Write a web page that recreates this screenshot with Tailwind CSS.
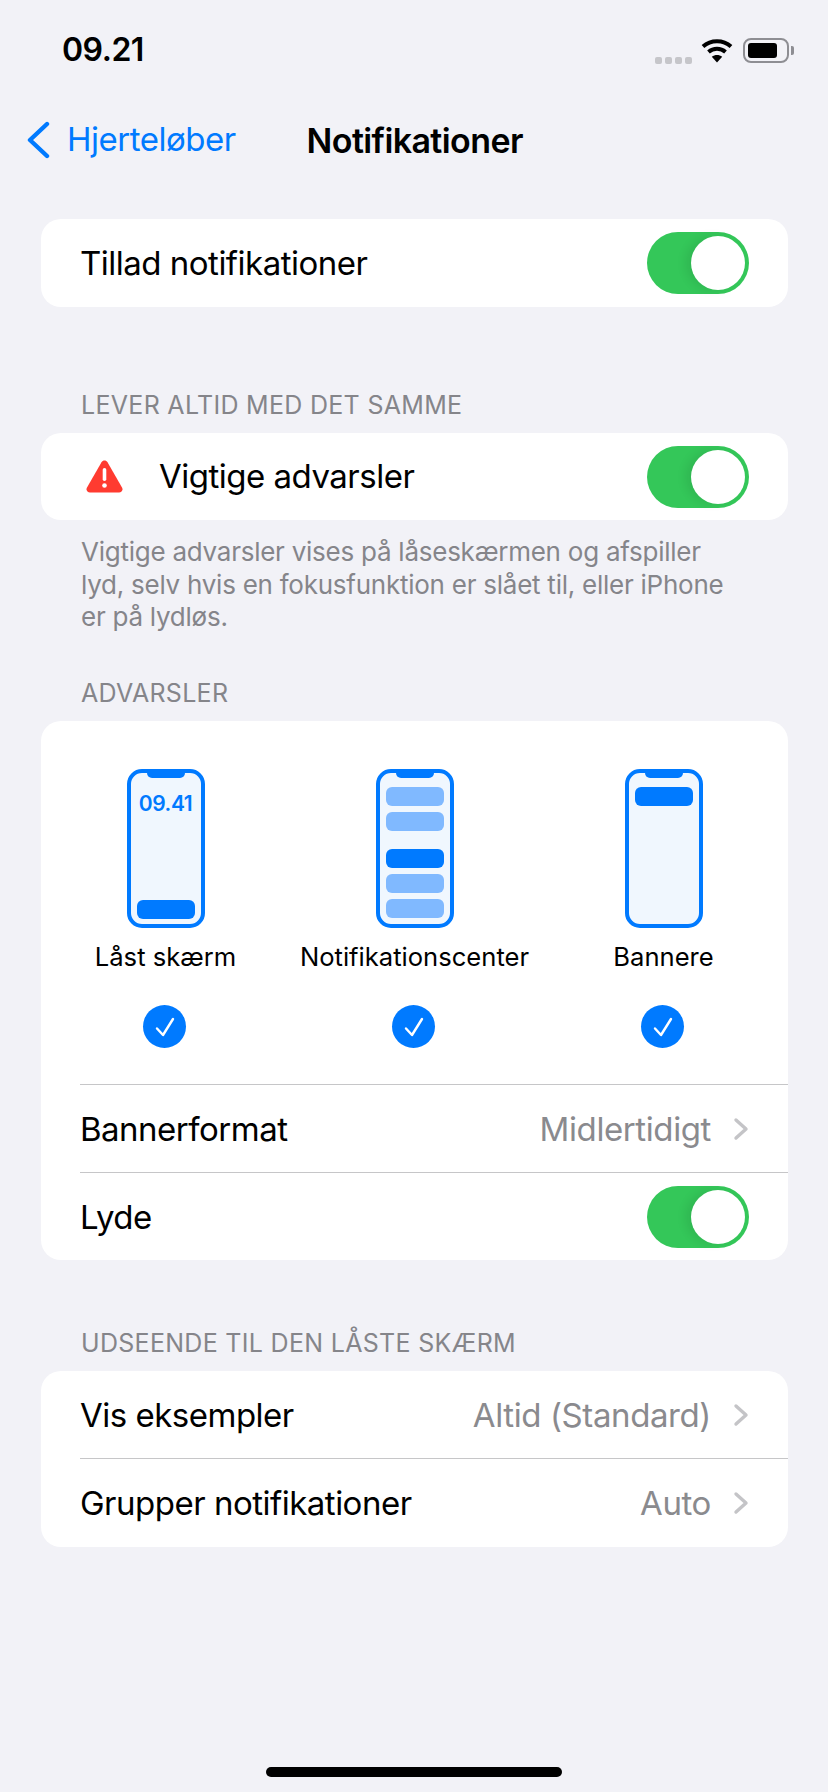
<!DOCTYPE html>
<html lang="da">
<head>
    <meta charset="UTF-8">
    <meta name="viewport" content="width=device-width, initial-scale=1.0">
    <title>Notifikationer</title>
    <script src="https://cdn.jsdelivr.net/npm/@tailwindcss/browser@4"></script>
</head>
<body class="bg-[#f2f2f7] font-[Inter,sans-serif] text-black">
<div class="w-[828px] h-[1792px] flex flex-col overflow-hidden">

    <!-- status bar -->
    <div class="h-[100px] shrink-0 flex items-center justify-between pl-[62px] pr-[34px]">
        <span class="text-[32px] font-semibold tracking-[-0.5px]">09.21</span>
        <div class="flex items-center">
            <div class="flex gap-[3px] mt-[20px] mr-[9px]">
                <span class="w-[7px] h-[7px] rounded-[2px] bg-[#c6c6ca]"></span>
                <span class="w-[7px] h-[7px] rounded-[2px] bg-[#c6c6ca]"></span>
                <span class="w-[7px] h-[7px] rounded-[2px] bg-[#c6c6ca]"></span>
                <span class="w-[7px] h-[7px] rounded-[2px] bg-[#c6c6ca]"></span>
            </div>
            <svg class="mr-[10px]" width="32" height="26" viewBox="0 0 32 26" fill="none" stroke="#000" stroke-width="4">
                <path d="M2 9.5C9.8 2.5 22.2 2.5 30 9.5"/>
                <path d="M7.5 15C12.3 10.8 19.7 10.8 24.500 15"/>
                <path d="M16 25.500L10.800 19.800C13.800 17.500 18.200 17.500 21.200 19.800Z" fill="#000" stroke="none"/>
            </svg>
            <div class="w-[46px] h-[25px] rounded-[8px] border-2 border-[#8e8e93] p-[3px] flex">
                <div class="w-[29px] h-full rounded-[3px] bg-black"></div>
            </div>
            <div class="w-[3px] h-[9px] ml-[2px] rounded-r-[2px] bg-[#8e8e93]"></div>
        </div>
    </div>

    <!-- nav bar -->
    <div class="h-[80px] shrink-0 flex items-center relative">
        <svg class="ml-[25px]" width="26" height="38" viewBox="0 0 26 38" fill="none" stroke="#007aff" stroke-width="4.400" stroke-linecap="round" stroke-linejoin="round">
            <path d="M22 3L5 19L22 35"/>
        </svg>
        <span class="ml-[16px] text-[#007aff] text-[33px] tracking-[-0.5px]">Hjerteløber</span>
        <span class="ml-[71px] text-[34px] font-semibold tracking-[-0.6px]">Notifikationer</span>
    </div>

    <!-- allow -->
    <div class="mt-[39px] ml-[41px] w-[747px] h-[88px] shrink-0 bg-white rounded-[20px] flex items-center justify-between pl-[39px] pr-[39px]">
        <span class="mt-[2px] text-[33px] tracking-[-0.5px]">Tillad notifikationer</span>
        <div class="w-[102px] h-[62px] rounded-full bg-[#34c759] p-[4px] flex justify-end">
            <div class="w-[54px] h-[54px] rounded-full bg-white shadow-[-6px_0_10px_rgba(0,0,0,0.08)]"></div>
        </div>
    </div>

    <!-- critical alerts -->
    <div class="h-[126px] shrink-0 mx-[40px] pl-[41px] flex items-end pb-[14px] text-[#85858a] text-[25px] leading-[28px] tracking-[0.3px]">LEVER ALTID MED DET SAMME</div>
    <div class="ml-[41px] w-[747px] h-[87px] shrink-0 bg-white rounded-[20px] flex items-center justify-between pr-[39px]">
        <div class="flex items-center">
            <svg class="ml-[45px]" width="37" height="33" viewBox="0 0 37 33">
                <path d="M15.500 2.200C16.800 0 20.200 0 21.500 2.200L36 27.500C37.300 29.800 35.700 32.500 33 32.500H4C1.300 32.500 -0.300 29.800 1 27.500Z" fill="#ff3b30"/>
                <rect x="16.700" y="8" width="3.600" height="13" rx="1.800" fill="#fff"/>
                <circle cx="18.500" cy="25.500" r="2.300" fill="#fff"/>
            </svg>
            <span class="ml-[36px] text-[33px] tracking-[-0.5px]">Vigtige advarsler</span>
        </div>
        <div class="w-[102px] h-[62px] rounded-full bg-[#34c759] p-[4px] flex justify-end">
            <div class="w-[54px] h-[54px] rounded-full bg-white shadow-[-6px_0_10px_rgba(0,0,0,0.08)]"></div>
        </div>
    </div>
    <p class="mt-[16px] mx-[40px] pl-[41px] h-[97px] shrink-0 text-[#85858a] text-[26px] leading-[32.500px] tracking-[-0.25px] whitespace-nowrap">
        <span class="block">Vigtige advarsler vises på låseskærmen og afspiller</span>
        <span class="block">lyd, selv hvis en fokusfunktion er slået til, eller iPhone</span>
        <span class="block">er på lydløs.</span>
    </p>

    <!-- alerts -->
    <div class="h-[88px] shrink-0 mx-[40px] pl-[41px] flex items-end pb-[14px] text-[#85858a] text-[25px] leading-[28px] tracking-[0.3px]">ADVARSLER</div>
    <div class="ml-[41px] w-[747px] h-[539px] shrink-0 bg-white rounded-[20px] flex flex-col">
        <div class="grid grid-cols-3 pt-[48px] h-[363px]">
            <div class="flex flex-col items-center">
                <div class="relative w-[78px] h-[159px] rounded-[15px] border-[4px] border-[#007aff] bg-[#f0f7fe] flex flex-col items-center px-[6px]">
                    <div class="absolute top-0 left-[16px] w-[38px] h-[5px] rounded-b-[5px] bg-[#007aff]"></div>
                    <span class="mt-[17px] text-[#007aff] text-[21px] leading-[28px] font-semibold tracking-[-0.4px]">09.41</span>
                    <div class="mt-auto mb-[5px] w-full h-[19px] rounded-[6px] bg-[#007aff]"></div>
                </div>
                <span class="mt-[14px] text-[25.6px] leading-[30px] whitespace-nowrap">Låst skærm</span>
                <div class="mt-[33px] mr-[2px] w-[43px] h-[43px] rounded-full bg-[#007aff] flex items-center justify-center">
                    <svg width="24" height="24" viewBox="0 0 24 24" fill="none" stroke="#fff" stroke-width="2.400" stroke-linecap="round" stroke-linejoin="round"><path d="M4 13.500L10 20L20 4"/></svg>
                </div>
            </div>
            <div class="flex flex-col items-center">
                <div class="relative w-[78px] h-[159px] rounded-[15px] border-[4px] border-[#007aff] bg-[#f0f7fe] flex flex-col items-center px-[6px] pt-[14px]">
                    <div class="absolute top-0 left-[16px] w-[38px] h-[5px] rounded-b-[5px] bg-[#007aff]"></div>
                    <div class="w-full h-[19px] rounded-[6px] bg-[#80b9ff]"></div>
                    <div class="mt-[6px] w-full h-[19px] rounded-[6px] bg-[#80b9ff]"></div>
                    <div class="mt-[18px] w-full h-[19px] rounded-[6px] bg-[#007aff]"></div>
                    <div class="mt-[6px] w-full h-[19px] rounded-[6px] bg-[#80b9ff]"></div>
                    <div class="mt-[6px] w-full h-[19px] rounded-[6px] bg-[#80b9ff]"></div>
                </div>
                <span class="mt-[14px] text-[25.6px] leading-[30px] whitespace-nowrap">Notifikationscenter</span>
                <div class="mt-[33px] mr-[2px] w-[43px] h-[43px] rounded-full bg-[#007aff] flex items-center justify-center">
                    <svg width="24" height="24" viewBox="0 0 24 24" fill="none" stroke="#fff" stroke-width="2.400" stroke-linecap="round" stroke-linejoin="round"><path d="M4 13.500L10 20L20 4"/></svg>
                </div>
            </div>
            <div class="flex flex-col items-center">
                <div class="relative w-[78px] h-[159px] rounded-[15px] border-[4px] border-[#007aff] bg-[#f0f7fe] flex flex-col items-center px-[6px] pt-[14px]">
                    <div class="absolute top-0 left-[16px] w-[38px] h-[5px] rounded-b-[5px] bg-[#007aff]"></div>
                    <div class="w-full h-[19px] rounded-[6px] bg-[#007aff]"></div>
                </div>
                <span class="mt-[14px] text-[25.6px] leading-[30px] whitespace-nowrap">Bannere</span>
                <div class="mt-[33px] mr-[2px] w-[43px] h-[43px] rounded-full bg-[#007aff] flex items-center justify-center">
                    <svg width="24" height="24" viewBox="0 0 24 24" fill="none" stroke="#fff" stroke-width="2.400" stroke-linecap="round" stroke-linejoin="round"><path d="M4 13.500L10 20L20 4"/></svg>
                </div>
            </div>
        </div>
        <div class="ml-[39px] h-[88px] border-t border-[#c6c6c8] flex items-center justify-between pr-[39px]">
            <span class="mt-[2px] text-[33px] tracking-[-0.5px]">Bannerformat</span>
            <div class="flex items-center">
                <span class="mt-[2px] text-[#8a8a8e] text-[33px] tracking-[-0.4px]">Midlertidigt</span>
                <svg class="ml-[22px]" width="16" height="24" viewBox="0 0 16 24" fill="none" stroke="#c4c4c7" stroke-width="3.400" stroke-linecap="round" stroke-linejoin="round"><path d="M3 3L13 12L3 21"/></svg>
            </div>
        </div>
        <div class="ml-[39px] h-[88px] border-t border-[#c6c6c8] flex items-center justify-between pr-[39px]">
            <span class="mt-[2px] text-[33px] tracking-[-0.5px]">Lyde</span>
            <div class="w-[102px] h-[62px] rounded-full bg-[#34c759] p-[4px] flex justify-end">
                <div class="w-[54px] h-[54px] rounded-full bg-white shadow-[-6px_0_10px_rgba(0,0,0,0.08)]"></div>
            </div>
        </div>
    </div>

    <!-- lock screen -->
    <div class="h-[111px] shrink-0 mx-[40px] pl-[41px] flex items-end pb-[14px] text-[#85858a] text-[25px] leading-[28px] tracking-[0.3px]">UDSEENDE TIL DEN LÅSTE SKÆRM</div>
    <div class="ml-[41px] w-[747px] h-[176px] shrink-0 bg-white rounded-[20px] flex flex-col">
        <div class="ml-[39px] h-[87px] flex items-center justify-between pr-[39px]">
            <span class="mt-[2px] text-[33px] tracking-[-0.5px]">Vis eksempler</span>
            <div class="flex items-center">
                <span class="mt-[2px] text-[#8a8a8e] text-[33px] tracking-[-0.4px]">Altid (Standard)</span>
                <svg class="ml-[22px]" width="16" height="24" viewBox="0 0 16 24" fill="none" stroke="#c4c4c7" stroke-width="3.400" stroke-linecap="round" stroke-linejoin="round"><path d="M3 3L13 12L3 21"/></svg>
            </div>
        </div>
        <div class="ml-[39px] h-[89px] border-t border-[#c6c6c8] flex items-center justify-between pr-[39px]">
            <span class="mt-[2px] text-[33px] tracking-[-0.5px]">Grupper notifikationer</span>
            <div class="flex items-center">
                <span class="mt-[2px] text-[#8a8a8e] text-[33px] tracking-[-0.4px]">Auto</span>
                <svg class="ml-[22px]" width="16" height="24" viewBox="0 0 16 24" fill="none" stroke="#c4c4c7" stroke-width="3.400" stroke-linecap="round" stroke-linejoin="round"><path d="M3 3L13 12L3 21"/></svg>
            </div>
        </div>
    </div>

    <!-- home indicator -->
    <div class="mt-auto mb-[15px] mx-auto w-[296px] h-[10px] rounded-full bg-black"></div>
</div>
</body>
</html>
